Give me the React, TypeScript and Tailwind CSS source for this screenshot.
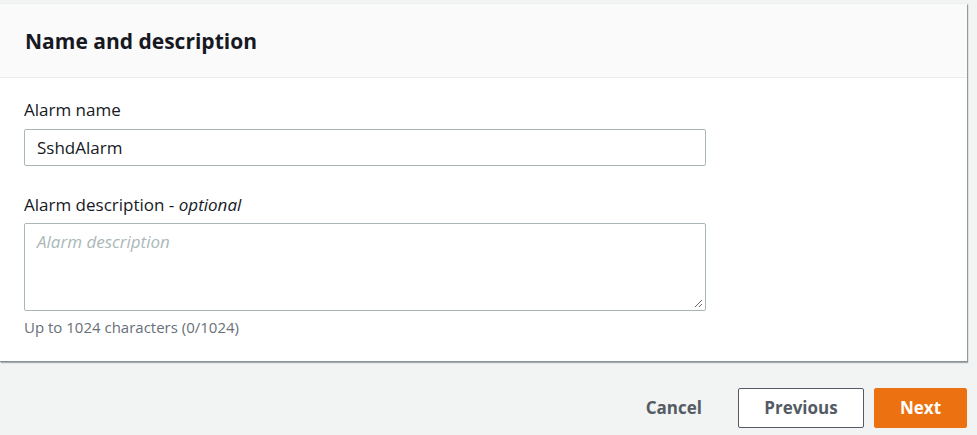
import React from "react";

export default function App() {
  return (
    <div
      className="w-[977px] h-[435px] bg-[#f2f3f3] overflow-hidden pt-[4px]"
      style={{ fontFamily: '"Open Sans", "Noto Sans", Arial, sans-serif' }}
    >
      <div className="w-[967px] bg-white shadow-[1px_1px_1px_0_rgba(0,28,36,0.3),1px_0_1px_0_rgba(0,28,36,0.15)] border-b border-[#879196]">
        <div className="bg-[#fafafa] border-b border-[#eaeded] px-[25px] h-[74px] flex items-center">
          <h2 className="text-[21px] font-bold text-[#16191f] leading-[28px] tracking-[0px]">Name and description</h2>
        </div>
        <div className="px-[24px] pt-[20px] pb-[24px]">
          <label className="block text-[17px] leading-[24px] text-[#16191f]">Alarm name</label>
          <div className="mt-[7px] w-[682px] h-[37px] border border-[#aab7b8] rounded-[2px] flex items-center px-[12px] text-[17px] text-[#16191f]">
            SshdAlarm
          </div>
          <label className="block mt-[27px] text-[17px] leading-[24px] text-[#16191f]">
            Alarm description - <i>optional</i>
          </label>
          <div className="relative mt-[6px] w-[682px] h-[88px] border border-[#aab7b8] rounded-[2px] px-[12px] pt-[6px] text-[17px] leading-[24px] italic text-[#aab7b8]">
            Alarm description
            <svg className="absolute right-[2px] bottom-[2px]" width="9" height="9" viewBox="0 0 9 9">
              <line x1="1" y1="8" x2="8" y2="1" stroke="#6b6b6b" strokeWidth="1" />
              <line x1="5" y1="8" x2="8" y2="5" stroke="#6b6b6b" strokeWidth="1" />
            </svg>
          </div>
          <p className="mt-[6px] text-[15px] leading-[20px] text-[#687078]">Up to 1024 characters (0/1024)</p>
        </div>
      </div>
      <div className="w-[967px] flex justify-end items-center mt-[26px] gap-[10px]">
        <button className="px-[20px] h-[40px] text-[17px] font-bold text-[#545b64] mr-[6px]">Cancel</button>
        <button className="w-[126px] h-[40px] border border-[#545b64] rounded-[2px] bg-white text-[17px] font-bold text-[#545b64]">Previous</button>
        <button className="w-[93px] h-[40px] rounded-[2px] bg-[#ec7211] border border-[#ec7211] text-[17px] font-bold text-white">Next</button>
      </div>
    </div>
  );
}
